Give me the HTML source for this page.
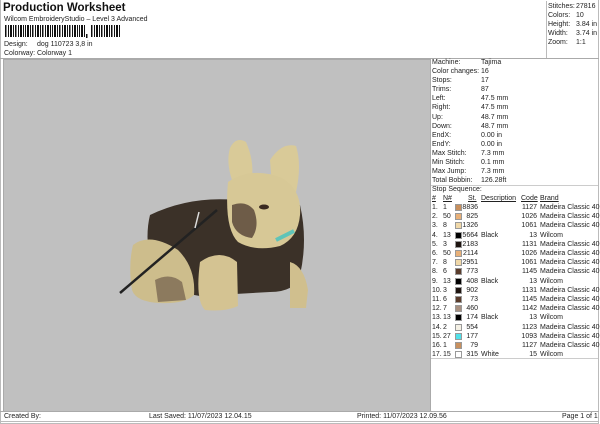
<!DOCTYPE html><html><head><style>
*{margin:0;padding:0;box-sizing:border-box}
body{width:600px;height:424px;background:#fff;font-family:"Liberation Sans",Arial,sans-serif;font-size:7px;color:#222;position:relative;overflow:hidden}
.a{position:absolute;white-space:nowrap;line-height:9px}
</style></head><body>
<div class="a" style="left:0;top:0;width:599px;height:424px;border:1px solid #bbb;border-top:none"></div>
<div class="a" style="left:3px;top:1px;font-size:11.5px;font-weight:bold;line-height:14px;color:#111">Production Worksheet</div>
<div class="a" style="left:4px;top:15px;font-size:7px">Wilcom EmbroideryStudio – Level 3 Advanced</div>
<svg class="a" style="left:5px;top:25px" width="118" height="14">
<g fill="#111">
<rect x="0" y="0" width="1.5" height="12"/><rect x="3" y="0" width="1" height="12"/><rect x="5" y="0" width="2" height="12"/><rect x="8" y="0" width="1" height="12"/><rect x="10" y="0" width="1.5" height="12"/><rect x="13" y="0" width="1" height="12"/><rect x="15" y="0" width="2" height="12"/><rect x="18" y="0" width="1" height="12"/><rect x="20" y="0" width="1" height="12"/><rect x="22" y="0" width="2" height="12"/><rect x="25" y="0" width="1" height="12"/><rect x="27" y="0" width="1.5" height="12"/><rect x="30" y="0" width="1" height="12"/><rect x="32" y="0" width="2" height="12"/><rect x="35" y="0" width="1" height="12"/><rect x="37" y="0" width="1.5" height="12"/><rect x="40" y="0" width="1" height="12"/><rect x="42" y="0" width="2" height="12"/><rect x="45" y="0" width="1" height="12"/><rect x="47" y="0" width="1" height="12"/><rect x="49" y="0" width="2" height="12"/><rect x="52" y="0" width="1" height="12"/><rect x="54" y="0" width="1.5" height="12"/><rect x="57" y="0" width="1" height="12"/><rect x="59" y="0" width="2" height="12"/><rect x="62" y="0" width="1" height="12"/><rect x="64" y="0" width="1.5" height="12"/><rect x="67" y="0" width="1" height="12"/><rect x="69" y="0" width="2" height="12"/><rect x="72" y="0" width="1" height="12"/><rect x="74" y="0" width="1" height="12"/><rect x="76" y="0" width="2" height="12"/><rect x="79" y="0" width="1" height="12"/>
<rect x="81" y="9" width="1.5" height="4"/>
<rect x="86" y="0" width="1.5" height="12"/><rect x="89" y="0" width="1" height="12"/><rect x="91" y="0" width="2" height="12"/><rect x="94" y="0" width="1" height="12"/><rect x="96" y="0" width="1.5" height="12"/><rect x="99" y="0" width="1" height="12"/><rect x="101" y="0" width="2" height="12"/><rect x="104" y="0" width="1" height="12"/><rect x="106" y="0" width="1.5" height="12"/><rect x="109" y="0" width="1" height="12"/><rect x="111" y="0" width="2" height="12"/><rect x="114" y="0" width="1" height="12"/>
</g></svg>
<div class="a" style="left:4px;top:40px">Design:</div><div class="a" style="left:37px;top:40px">dog 110723 3,8 in</div>
<div class="a" style="left:4px;top:49px">Colorway:</div><div class="a" style="left:37px;top:49px">Colorway 1</div>
<div class="a" style="left:546px;top:1px;width:51px;height:57px;border-left:1px solid #bbb"></div>
<div class="a" style="left:548px;top:2px">Stitches:<br>Colors:<br>Height:<br>Width:<br>Zoom:</div>
<div class="a" style="left:576px;top:2px">27816<br>10<br>3.84 in<br>3.74 in<br>1:1</div>
<div class="a" style="left:0;top:58px;width:599px;border-top:1px solid #aaa"></div>
<div class="a" style="left:3px;top:59px;width:427px;height:352px;background:#c0c0c0;border-left:1px solid #aaa;border-top:1px solid #aaa"></div>
<svg class="a" style="left:3px;top:59px" width="427" height="352">
<g transform="translate(-3,-59)">
<path d="M150 215 Q190 196 235 200 L300 205 Q308 240 300 275 Q295 292 270 292 L200 296 Q160 290 150 262 Q145 235 150 215Z" fill="#3b3128"/>
<path d="M133 245 Q150 232 178 250 Q196 268 194 295 Q185 304 160 303 Q136 302 132 290 Q128 265 133 245Z" fill="#cdbd8c"/>
<path d="M155 280 Q170 272 182 282 L186 300 L158 302Z" fill="#8c7a5e"/>
<path d="M200 262 Q220 248 237 262 L238 306 Q225 312 205 310 Q195 300 200 262Z" fill="#d4c392"/>
<path d="M290 262 Q304 266 308 290 L306 308 L290 308Z" fill="#d0bf8e"/>
<path d="M230 148 Q236 136 246 142 Q254 160 252 178 L232 180 Q226 162 230 148Z" fill="#d9ca98"/>
<path d="M270 160 Q282 142 296 146 Q302 165 296 192 L272 186Z" fill="#d9ca98"/>
<path d="M228 182 Q252 166 282 178 Q302 190 300 215 Q298 238 280 246 Q255 252 238 242 Q224 228 228 182Z" fill="#d7c896"/>
<path d="M232 205 Q246 200 254 210 Q260 226 252 238 Q236 236 232 222Z" fill="#6e5c48"/>
<ellipse cx="264" cy="207" rx="5" ry="2.5" fill="#3a2a20"/>
<path d="M120 293 L217 210" stroke="#222" stroke-width="2.5" fill="none"/>
<path d="M195 228 L199 212" stroke="#ddd" stroke-width="1.5"/>
<path d="M276 240 L294 231" stroke="#5fc4b8" stroke-width="4"/>
</g></svg>
<div class="a" style="left:430px;top:59px;width:168px;height:352px;border-left:1px solid #aaa"></div>
<div class="a" style="left:432px;top:58px;line-height:9.1px">Machine:<br>Color changes:<br>Stops:<br>Trims:<br>Left:<br>Right:<br>Up:<br>Down:<br>EndX:<br>EndY:<br>Max Stitch:<br>Min Stitch:<br>Max Jump:<br>Total Bobbin:</div>
<div class="a" style="left:481px;top:58px;line-height:9.1px">Tajima<br>16<br>17<br>87<br>47.5 mm<br>47.5 mm<br>48.7 mm<br>48.7 mm<br>0.00 in<br>0.00 in<br>7.3 mm<br>0.1 mm<br>7.3 mm<br>126.28ft</div>
<div class="a" style="left:431px;top:185px;width:167px;border-top:1px solid #ccc"></div>
<div class="a" style="left:432px;top:185px">Stop Sequence:</div>
<div class="a" style="left:432px;top:194px;text-decoration:underline">#</div>
<div class="a" style="left:443px;top:194px;text-decoration:underline">N#</div>
<div class="a" style="left:468px;top:194px;text-decoration:underline">St.</div>
<div class="a" style="left:481px;top:194px;text-decoration:underline">Description</div>
<div class="a" style="left:521px;top:194px;text-decoration:underline">Code</div>
<div class="a" style="left:540px;top:194px;text-decoration:underline">Brand</div>
<div id="t"></div>
<div class="a" style="left:431px;top:358px;width:167px;border-top:1px solid #ccc"></div>
<div class="a" style="left:0;top:411px;width:599px;border-top:1px solid #aaa"></div>
<div class="a" style="left:4px;top:412px">Created By:</div>
<div class="a" style="left:149px;top:412px">Last Saved: 11/07/2023 12.04.15</div>
<div class="a" style="left:357px;top:412px">Printed: 11/07/2023 12.09.56</div>
<div class="a" style="left:562px;top:412px">Page 1 of 1</div>
<div class="a" style="left:0;top:421px;width:599px;border-top:1px solid #bbb"></div>
<script>
var r=[["1","#c8905e","8836","","1127","Madeira Classic 40"],["50","#e8b078","825","","1026","Madeira Classic 40"],["8","#f0d8a8","1326","","1061","Madeira Classic 40"],["13","#000","5664","Black","13","Wilcom"],["3","#1e1410","2183","","1131","Madeira Classic 40"],["50","#e8b078","2114","","1026","Madeira Classic 40"],["8","#f0d8a8","2951","","1061","Madeira Classic 40"],["6","#5a3c2c","773","","1145","Madeira Classic 40"],["13","#000","408","Black","13","Wilcom"],["3","#1e1410","902","","1131","Madeira Classic 40"],["6","#5a3c2c","73","","1145","Madeira Classic 40"],["7","#a89080","460","","1142","Madeira Classic 40"],["13","#000","174","Black","13","Wilcom"],["2","#f4f0e4","554","","1123","Madeira Classic 40"],["27","#50e0e8","177","","1093","Madeira Classic 40"],["1","#c8905e","79","","1127","Madeira Classic 40"],["15","#fff","315","White","15","Wilcom"]];
var h="";r.forEach(function(x,i){var y=203+i*9.2;
h+='<div class="a" style="left:432px;top:'+y+'px">'+(i+1)+'.</div><div class="a" style="left:443px;top:'+y+'px">'+x[0]+'</div><div class="a" style="left:455px;top:'+(y+1)+'px;width:7px;height:7px;background:'+x[1]+';border:1px solid #999"></div><div class="a" style="left:460px;top:'+y+'px;width:18px;text-align:right">'+x[2]+'</div><div class="a" style="left:481px;top:'+y+'px">'+x[3]+'</div><div class="a" style="left:516px;top:'+y+'px;width:21px;text-align:right">'+x[4]+'</div><div class="a" style="left:540px;top:'+y+'px">'+x[5]+'</div>';});
document.getElementById("t").innerHTML=h;
</script>
</body></html>
